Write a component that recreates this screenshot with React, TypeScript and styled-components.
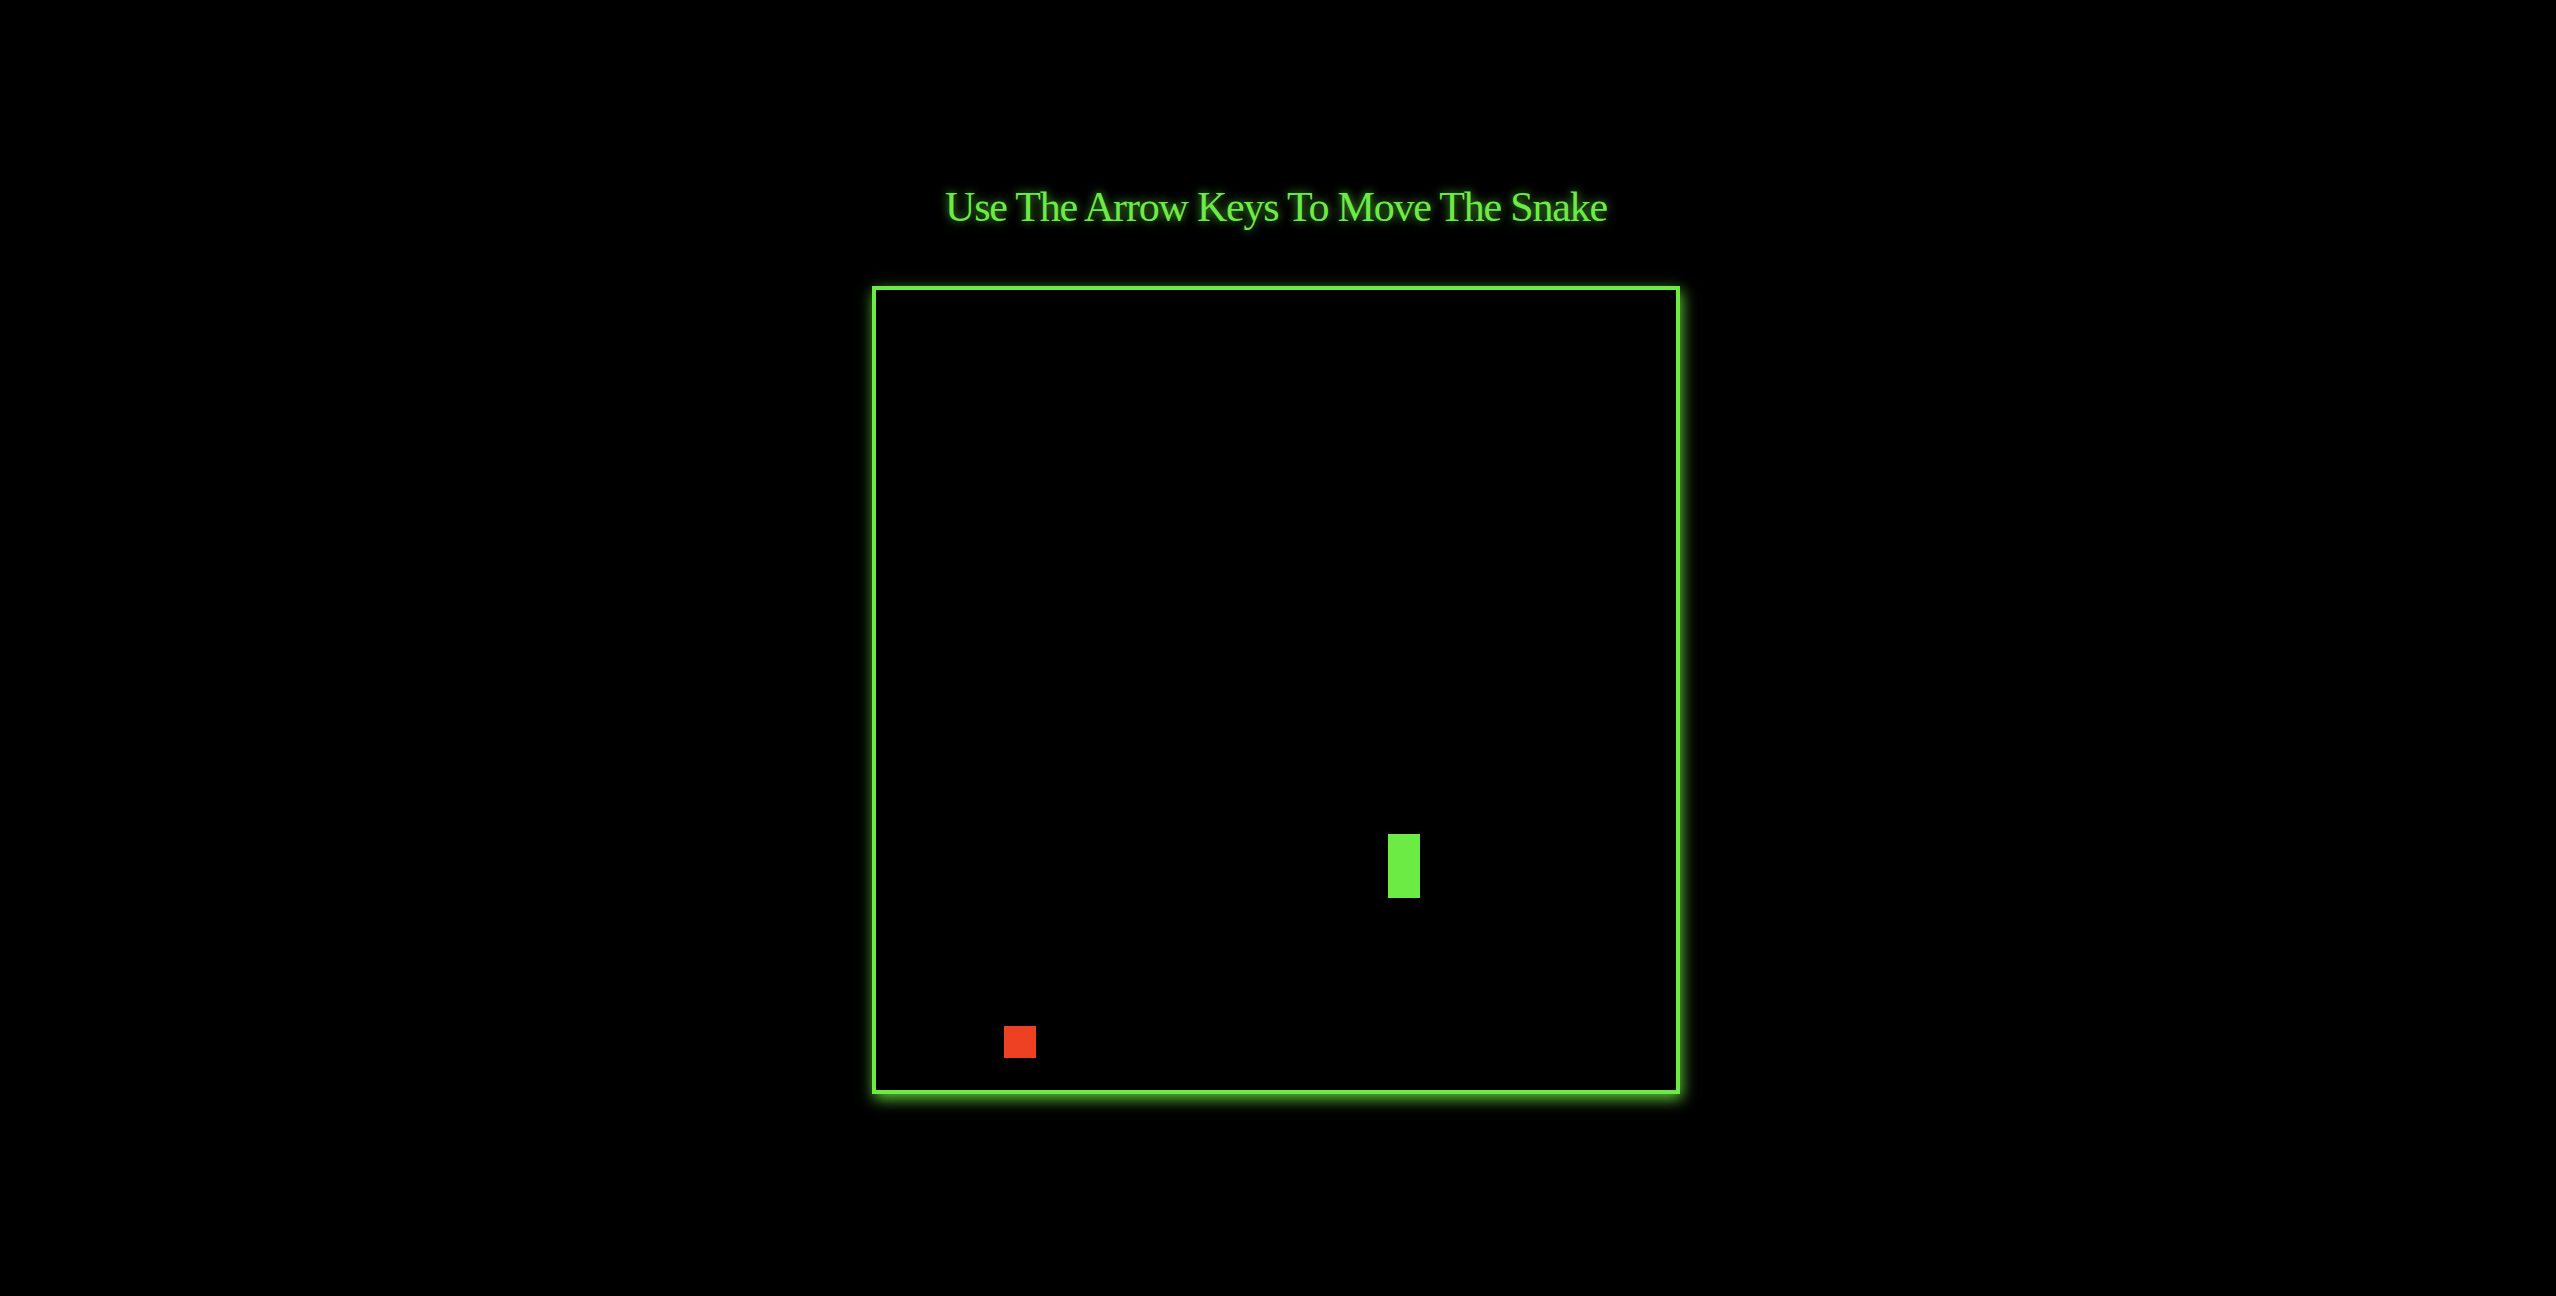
import React from "react";
import styled, { createGlobalStyle } from "styled-components";

const GREEN = "#6deb45";
const RED = "#ee4123";
const CELL = 32;
const CELLS = 25;

const Global = createGlobalStyle`
  html, body {
    margin: 0;
    padding: 0;
    background: #000000;
    min-height: 100%;
  }
  body {
    font-family: "Liberation Serif", "Times New Roman", serif;
  }
`;

const Page = styled.main`
  display: flex;
  flex-direction: column;
  align-items: center;
  min-height: 1296px;
  padding-top: 183px;
  box-sizing: border-box;
  background: #000;
`;

const Title = styled.h1`
  margin: 0 4px 55px 0;
  font-family: "Liberation Serif", "Times New Roman", serif;
  font-weight: 400;
  font-size: 42px;
  line-height: 48px;
  letter-spacing: -1.2px;
  color: ${GREEN};
  text-shadow: 0 0 10px rgba(109, 235, 69, 0.75);
`;

const Board = styled.div`
  display: grid;
  grid-template-columns: repeat(${CELLS}, ${CELL}px);
  grid-template-rows: repeat(${CELLS}, ${CELL}px);
  width: ${CELL * CELLS}px;
  height: ${CELL * CELLS}px;
  border: 4px solid ${GREEN};
  margin-right: 4px;
  background: #000;
  box-shadow: 2px 5px 14px rgba(109, 235, 69, 0.85);
`;

const Cell = styled.div<{ $kind: "snake" | "food" }>`
  background: ${(p) => (p.$kind === "snake" ? GREEN : RED)};
`;

const snake = [
  { x: 16, y: 17 },
  { x: 16, y: 18 },
];
const food = { x: 4, y: 23 };

export default function App() {
  return (
    <>
      <Global />
      <Page>
        <Title>Use The Arrow Keys To Move The Snake</Title>
        <Board>
          {snake.map((s, i) => (
            <Cell
              key={i}
              $kind="snake"
              style={{ gridColumn: s.x + 1, gridRow: s.y + 1 }}
            />
          ))}
          <Cell
            $kind="food"
            style={{ gridColumn: food.x + 1, gridRow: food.y + 1 }}
          />
        </Board>
      </Page>
    </>
  );
}
